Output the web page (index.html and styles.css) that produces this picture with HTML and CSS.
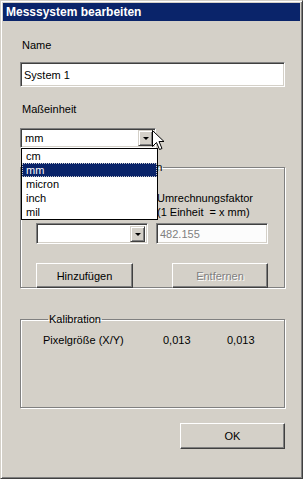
FILE: index.html
```html
<!DOCTYPE html>
<html lang="de">
<head>
    <meta charset="UTF-8">
    <title>Messsystem bearbeiten</title>
    <link rel="stylesheet" href="styles.css">
</head>
<body>
    <div class="window">
        <div class="titlebar">Messsystem bearbeiten</div>

        <div class="dialog">
            <div class="label label-name">Name</div>
            <div class="textbox textbox-name">System 1</div>

            <div class="label label-unit">Maßeinheit</div>
            <div class="combo combo-unit">
                <span class="combo-value">mm</span>
                <span class="combo-btn"><span class="arrow"></span></span>
                <ul class="dropdown">
                    <li>cm</li>
                    <li class="selected">mm</li>
                    <li>micron</li>
                    <li>inch</li>
                    <li>mil</li>
                </ul>
            </div>

            <fieldset class="group group-units">
                <legend>Zusätzliche Maßeinheiten</legend>
                <div class="units-grid">
                    <div class="unit-label"></div>
                    <div class="factor-label">Umrechnungsfaktor<br>(1 Einheit&nbsp; = x mm)</div>
                    <div class="combo combo-small">
                        <span class="combo-value"></span>
                        <span class="combo-btn"><span class="arrow"></span></span>
                    </div>
                    <div class="textbox textbox-factor">482.155</div>
                    <button class="btn btn-add">Hinzufügen</button>
                    <button class="btn btn-remove" disabled>Entfernen</button>
                </div>
            </fieldset>

            <fieldset class="group group-calib">
                <legend>Kalibration</legend>
                <div class="calib-row">
                    <span>Pixelgröße (X/Y)</span>
                    <span>0,013</span>
                    <span>0,013</span>
                </div>
            </fieldset>

            <div class="footer">
                <button class="btn btn-ok">OK</button>
            </div>
        </div>

        <!-- mouse pointer over the open combo -->
        <svg class="cursor" width="13" height="21" viewBox="0 0 13 21">
            <path d="M0.5 0.5 L0.5 16.5 L4.5 12.5 L7.5 19.5 L10 18.5 L7 11.5 L12 11.5 Z" fill="#fff" stroke="#000" stroke-width="1"/>
        </svg>
    </div>
</body>
</html>
```

FILE: styles.css
```css
/* classic win dialog */
:root {
    --face: #d4d0c8; --shadow: #808080; --dark: #404040; --light: #ffffff; --title: #0a246a;
}
html, body { margin: 0; padding: 0; }
body { font-family: "Liberation Sans", Arial, sans-serif; font-size: 11px; color: #000; background: var(--face); }

.window {
    position: relative;
    width: 303px;
    height: 479px;
    box-sizing: border-box;
    padding: 2px;
    background: var(--face);
    border: 1px solid;
    border-color: var(--face) var(--dark) var(--dark) var(--face);
    box-shadow: inset 1px 1px var(--light), inset -1px -1px var(--shadow);
}
.titlebar {
    height: 18px;
    line-height: 18px;
    padding-left: 3px;
    background: var(--title);
    color: #fff;
    font-weight: bold;
    font-size: 12px;
}

.dialog { display: flex; flex-direction: column; padding: 0 16px 0 17px; }
.label { line-height: 13px; padding-left: 2px; }
.label-name { margin-top: 18px; }
.label-unit { margin-top: 16px; }

/* sunken fields */
.textbox, .combo {
    box-sizing: border-box;
    background: #fff;
    border: 1px solid;
    border-color: var(--shadow) var(--light) var(--light) var(--shadow);
    box-shadow: inset 1px 1px var(--dark), inset -1px -1px var(--face);
}
.textbox { padding: 0 3px; display: flex; align-items: center; }
.textbox-name { margin-top: 10px; height: 25px; width: 265px; }
.textbox-factor { height: 21px; color: var(--shadow); background: #fcfcfc; }

.combo { position: relative; display: flex; align-items: center; height: 20px; }
.combo-value { flex: 1; padding-left: 4px; }
.combo-btn {
    box-sizing: border-box;
    width: 15px;
    height: 16px;
    margin-right: 2px;
    display: flex;
    align-items: center;
    justify-content: center;
    background: var(--face);
    border: 1px solid;
    border-color: var(--face) var(--dark) var(--dark) var(--face);
    box-shadow: inset 1px 1px var(--light), inset -1px -1px var(--shadow);
}
.arrow { width: 0; height: 0; border-left: 3px solid transparent; border-right: 3px solid transparent; border-top: 3px solid #000; margin-top: 1px; }

.combo-unit { margin-top: 12px; width: 136px; z-index: 10; }
.combo-small { height: 21px; }

.dropdown {
    position: absolute;
    left: 0;
    top: calc(100% + 1px);
    width: 137px;
    margin: 0;
    padding: 0;
    list-style: none;
    background: #fff;
    border: 1px solid #000;
    box-sizing: border-box;
}
.dropdown li { height: 14px; line-height: 14px; padding-left: 4px; }
.dropdown li.selected { background: var(--title); color: #fff; outline: 1px dotted #c9c9c9; outline-offset: -1px; }

/* etched group boxes */
.group {
    margin: 0;
    min-width: 0;
    border: 1px solid var(--shadow);
    box-shadow: inset 1px 1px var(--light), 1px 1px var(--light);
    width: 265px;
    box-sizing: border-box;
}
.group legend { line-height: 13px; padding: 0 1px; margin-left: 5px; }
.group-units legend { margin-left: 0; }
.group-units { margin-top: 13px; padding: 17px 15px 14px 15px; }
.group-calib { margin-top: 25px; padding: 8px 0 60px 22px; }

.units-grid {
    display: grid;
    grid-template-columns: 112px 112px;
    column-gap: 8px;
    grid-template-rows: 28px 21px 25px;
    row-gap: 4px;
}
.factor-label { line-height: 14px; margin-left: 1px; }
.btn-add, .btn-remove { margin-top: 15px; }
.btn-add { width: 97px; }
.btn-remove { width: 96px; justify-self: end; }

.btn {
    box-sizing: border-box;
    height: 25px;
    padding: 0;
    font-family: inherit;
    font-size: 11px;
    color: #000;
    background: var(--face);
    border: 1px solid;
    border-color: var(--light) var(--dark) var(--dark) var(--light);
    box-shadow: inset -1px -1px var(--shadow);
}
.btn:disabled { color: var(--shadow); text-shadow: 1px 1px var(--light); }

.calib-row { display: grid; grid-template-columns: 120px 64px auto; line-height: 13px; }

.footer { display: flex; justify-content: flex-end; margin-top: 15px; margin-right: -1px; }
.btn-ok { width: 105px; height: 26px; }

.cursor { position: absolute; left: 151px; top: 129px; z-index: 20; }
```
